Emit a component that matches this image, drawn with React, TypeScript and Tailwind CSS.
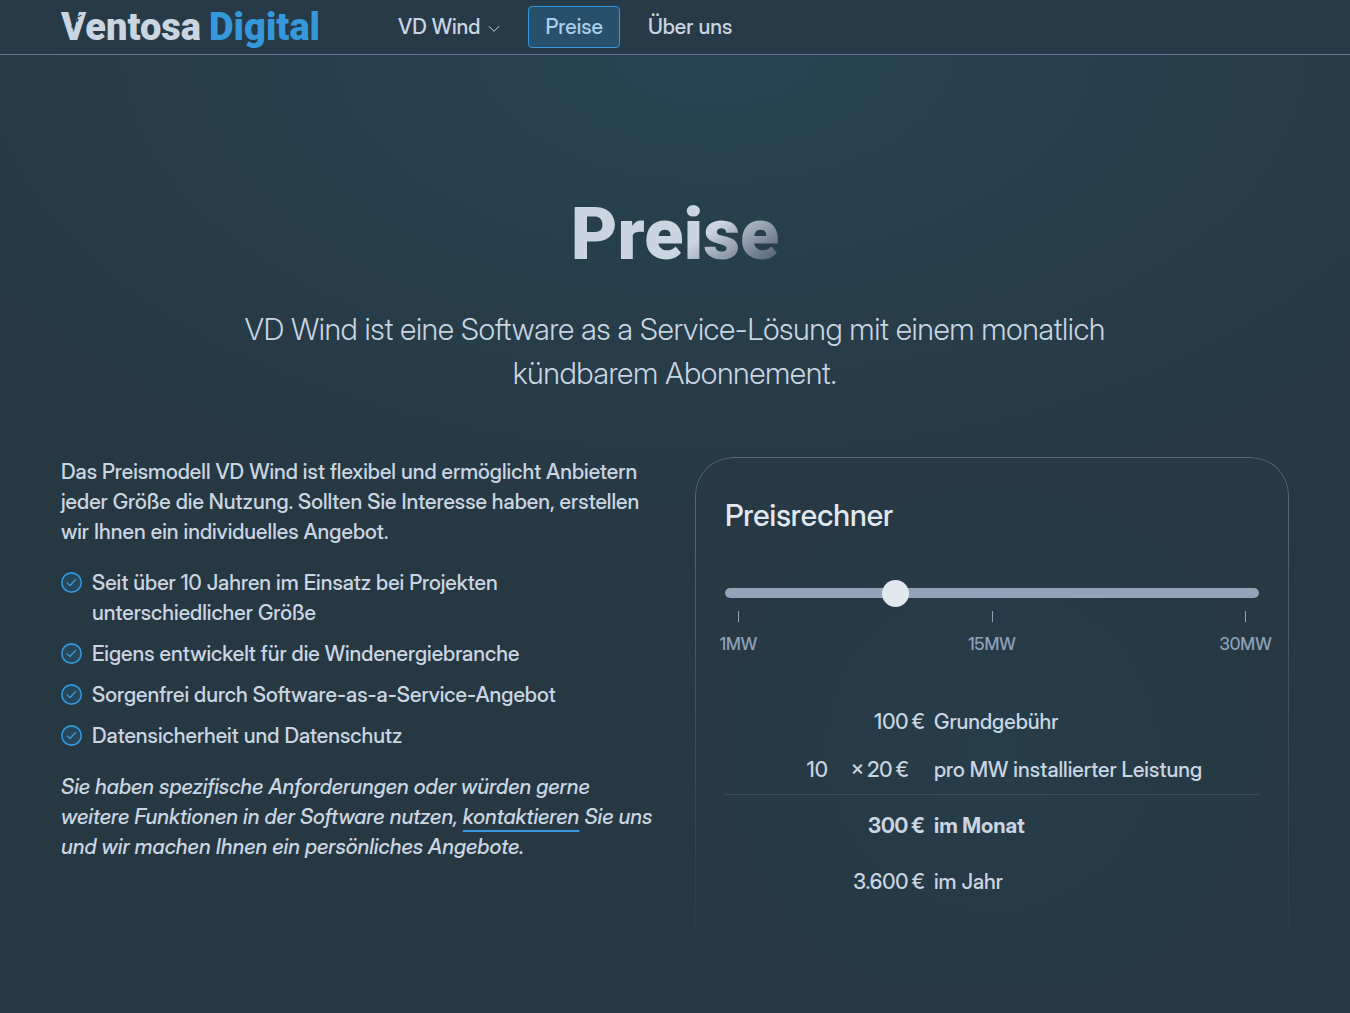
import React, { useState } from 'react';

const BASE_FEE = 100;
const FEE_PER_MW = 20;

const features = [
  'Seit über 10 Jahren im Einsatz bei Projekten unterschiedlicher Größe',
  'Eigens entwickelt für die Windenergiebranche',
  'Sorgenfrei durch Software-as-a-Service-Angebot',
  'Datensicherheit und Datenschutz',
];

const ticks = ['1MW', '15MW', '30MW'];

const CheckIcon = () => (
  <svg viewBox="0 0 20 20" className="mt-1 h-[21px] w-[21px] shrink-0" fill="none" stroke="#3498db" aria-hidden="true">
    <circle cx="10" cy="10" r="9.2" strokeWidth="1.5" fill="#3498db" fillOpacity="0.15" />
    <path d="M5.9 10.4 8.6 12.9 13.9 7.2" strokeWidth="1.3" strokeLinecap="round" strokeLinejoin="round" />
  </svg>
);

const Logo = () => (
  <a href="/" className="relative flex gap-2 font-['Roboto',sans-serif] text-[38px] leading-[50px] font-black">
    <span className="text-slate-300">Ventosa</span>
    <span className="text-[#3498db]">Digital</span>
    {/* wind turbine cut into the V */}
    <svg viewBox="0 0 20 28" className="absolute top-[10px] left-1 h-7 w-5" fill="none" stroke="#273a47" aria-hidden="true">
      <path d="M9.6 6.5 7 15.5" strokeWidth="1.6" />
      <path d="M9.8 6.2 16.5 3.2M9.8 6.2 5.5 4.4M9.8 6.2 13 7.6 12 10" strokeWidth="1.2" />
    </svg>
  </a>
);

const Navbar = () => (
  <header className="border-b border-slate-500 bg-[#273a47]">
    <div className="flex h-[54px] items-center px-[61px]">
      <Logo />
      <nav className="ml-[62px] flex items-center gap-3 text-[21px] font-medium text-slate-300">
        <button className="flex h-[42px] items-center gap-2 px-4">
          VD Wind
          <svg viewBox="0 0 12 8" className="mt-1 h-2 w-3" fill="none" stroke="currentColor" aria-hidden="true">
            <path d="M1.2 1.5 6 6.3 10.8 1.5" strokeLinecap="round" strokeLinejoin="round" />
          </svg>
        </button>
        <a
          href="#preise"
          className="flex h-[42px] items-center rounded border border-[#3498db] bg-[#29506a] px-4 text-[#a9cdec]"
        >
          Preise
        </a>
        <a href="#ueber-uns" className="flex h-[42px] items-center px-4">
          Über uns
        </a>
      </nav>
    </div>
  </header>
);

const PriceCalculator = () => {
  const [power, setPower] = useState(10);
  const monthly = BASE_FEE + FEE_PER_MW * power;

  return (
    <section className="relative rounded-t-[38px] bg-[radial-gradient(ellipse_at_50%_55%,#263d4a,#263944_70%)] px-[30px] pt-9 pb-20">
      <div className="pointer-events-none absolute inset-0 rounded-t-[38px] border border-b-0 border-[#5b6b73] [mask-image:linear-gradient(to_bottom,black,transparent_95%)]" />
      <h2 className="text-[30px] leading-[44px] font-medium text-slate-200">Preisrechner</h2>

      <input
        type="range"
        min={1}
        max={30}
        value={power}
        onChange={(e) => setPower(Number(e.target.value))}
        aria-label="Installierte Leistung in MW"
        className="mt-[51px] block h-[10px] w-full appearance-none rounded-full bg-[#94a3b8] [&::-webkit-slider-thumb]:h-[27px] [&::-webkit-slider-thumb]:w-[27px] [&::-webkit-slider-thumb]:appearance-none [&::-webkit-slider-thumb]:rounded-full [&::-webkit-slider-thumb]:bg-slate-200"
      />
      <div className="mt-[13px] flex justify-between px-[13px] text-[17px] font-medium text-slate-400">
        {ticks.map((tick) => (
          <div key={tick} className="flex w-px flex-col items-center gap-[10px]">
            <span className="h-[11px] w-px bg-slate-400" />
            <span className="leading-6 whitespace-nowrap">{tick}</span>
          </div>
        ))}
      </div>

      <table className="mt-[41px] w-full text-[21px] leading-[30px] font-medium">
        <tbody>
          <tr className="h-[49px]">
            <td className="w-[200px] p-0 text-right whitespace-nowrap">{BASE_FEE}&#8239;€</td>
            <td className="py-0 pr-0 pl-[9px]">Grundgebühr</td>
          </tr>
          <tr className="h-12 border-b border-[#3c4c5d]">
            <td className="p-0">
              <div className="flex items-center justify-end pr-4 whitespace-nowrap">
                <input
                  type="number"
                  min={1}
                  max={30}
                  value={power}
                  onChange={(e) => setPower(Number(e.target.value))}
                  aria-label="Leistung in MW"
                  className="w-11 appearance-none bg-transparent [&::-webkit-inner-spin-button]:appearance-none"
                />
                <span>×&#8239;{FEE_PER_MW}&#8239;€</span>
              </div>
            </td>
            <td className="py-0 pr-0 pl-[9px]">pro MW installierter Leistung</td>
          </tr>
          <tr className="h-16 font-bold">
            <td className="p-0 text-right">{monthly.toLocaleString('de-DE')}&#8239;€</td>
            <td className="py-0 pr-0 pl-[9px]">im Monat</td>
          </tr>
          <tr className="h-12">
            <td className="p-0 text-right">{(monthly * 12).toLocaleString('de-DE')}&#8239;€</td>
            <td className="py-0 pr-0 pl-[9px]">im Jahr</td>
          </tr>
        </tbody>
      </table>
    </section>
  );
};

const App = () => {
  return (
    <div className="min-h-screen bg-[#263842] bg-[radial-gradient(ellipse_70%_520px_at_53%_50px,#284454,transparent)] bg-no-repeat font-['Inter_Display','Inter',sans-serif] text-slate-300">
      <Navbar />
      <main className="px-[61px] pt-[130px]">
        <div className="flex flex-col items-center text-center">
          <h1 className="bg-[linear-gradient(145deg,#cbd5e1_58%,#475569_92%)] bg-clip-text font-['Roboto',sans-serif] text-[72px] leading-[100px] font-black text-transparent">
            Preise
          </h1>
          <p className="mt-[22px] max-w-[920px] text-[30px] leading-[44px] font-light">
            VD Wind ist eine Software as a Service-Lösung mit einem monatlich kündbarem Abonnement.
          </p>
        </div>

        <div className="mt-[62px] grid grid-cols-2 gap-10">
          <div className="text-[21px] leading-[30px] font-medium">
            <p>
              Das Preismodell VD Wind ist flexibel und ermöglicht Anbietern jeder Größe die Nutzung. Sollten Sie
              Interesse haben, erstellen wir Ihnen ein individuelles Angebot.
            </p>
            <ul className="my-[21px] flex flex-col gap-[11px]">
              {features.map((feature) => (
                <li key={feature} className="flex gap-[10px] pr-20">
                  <CheckIcon />
                  {feature}
                </li>
              ))}
            </ul>
            <p className="italic">
              Sie haben spezifische Anforderungen oder würden gerne weitere Funktionen in der Software nutzen,{' '}
              <a href="#kontakt" className="underline decoration-[#3498db] decoration-2 underline-offset-[6px]">
                kontaktieren
              </a>{' '}
              Sie uns und wir machen Ihnen ein persönliches Angebote.
            </p>
          </div>
          <PriceCalculator />
        </div>
      </main>
    </div>
  );
};

export default App;
